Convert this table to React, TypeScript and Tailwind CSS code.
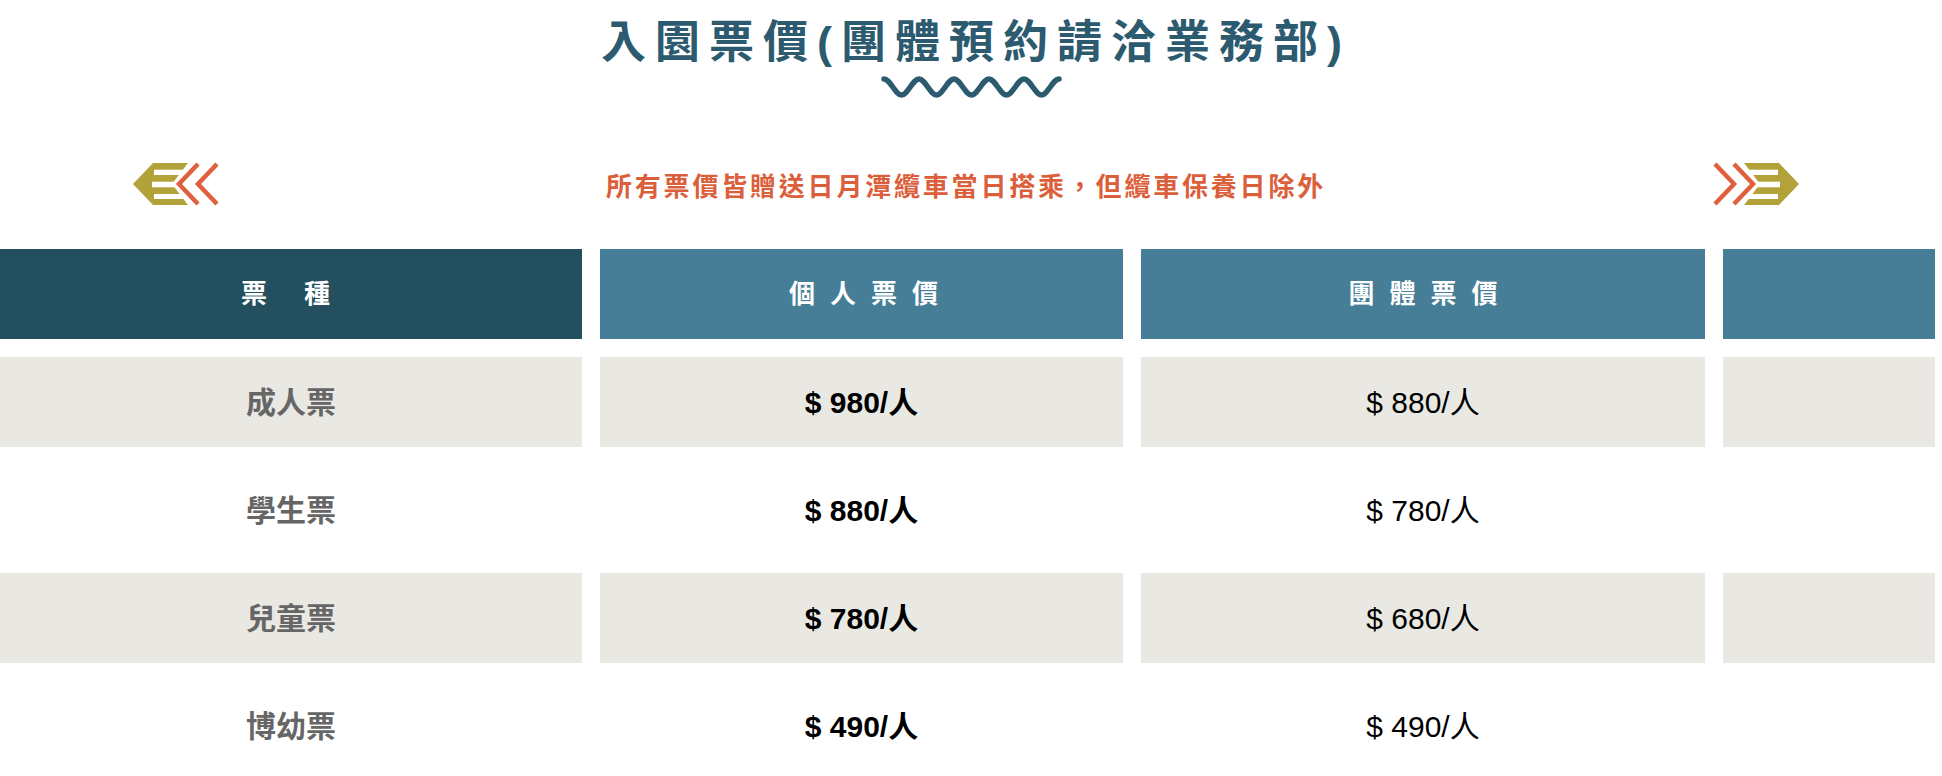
import React from "react";

// ── 票價資料 ────────────────────────────────────────────────────────────
const rows = [
  { name: "成人票", single: "$ 980/人", group: "$ 880/人" },
  { name: "學生票", single: "$ 880/人", group: "$ 780/人" },
  { name: "兒童票", single: "$ 780/人", group: "$ 680/人" },
  { name: "博幼票", single: "$ 490/人", group: "$ 490/人" },
];

const cjk = { fontFamily: '"Liberation Sans", "Noto Sans CJK TC", sans-serif' };

// ── 波浪線 ───────────────────────────────────────────────────────────────
function Wave() {
  let d = "M3 4";
  for (let i = 0; i < 5; i++) {
    const x = 3 + i * 35;
    d += ` C${x + 6} 4 ${x + 11.5} 20 ${x + 17.5} 20 C${x + 23.5} 20 ${x + 29} 4 ${x + 35} 4`;
  }
  return (
    <svg width="181" height="24" viewBox="0 0 181 24" className="block mx-auto">
      <path d={d} fill="none" stroke="#2c5a6f" strokeWidth="5.5" strokeLinecap="round" />
    </svg>
  );
}

// ── 箭頭裝飾 ─────────────────────────────────────────────────────────────
function Arrow({ flip = false }: { flip?: boolean }) {
  return (
    <svg
      width="88"
      height="46"
      viewBox="0 0 88 46"
      className={flip ? "block -scale-x-100" : "block"}
    >
      <polygon points="1,23 21,2 56,2 40,23 56,44 21,44" fill="#b3a23a" />
      <rect x="22" y="8.7" width="40" height="5.3" fill="#fff" />
      <rect x="20" y="20.7" width="40" height="5.6" fill="#fff" />
      <rect x="22" y="33" width="40" height="5" fill="#fff" />
      <polyline points="66,3 47,23 66,43" fill="none" stroke="#e0603e" strokeWidth="4.5" />
      <polyline points="85,3 66,23 85,43" fill="none" stroke="#e0603e" strokeWidth="4.5" />
    </svg>
  );
}

const headCls =
  "h-[90px] flex items-center justify-center text-white text-[26px] font-bold tracking-[15px]";

export default function App() {
  return (
    <div className="w-[1942px] h-[776px] bg-white overflow-hidden" style={cjk}>
      {/* 標題 */}
      <div className="pt-[17px] pl-[10px] text-center">
        <h1 className="text-[45px] leading-[52px] font-bold tracking-[9px] text-[#2c5a6f]">
          入園票價(團體預約請洽業務部)
        </h1>
      </div>
      <div className="mt-[6px]">
        <Wave />
      </div>

      {/* 說明 */}
      <div className="mt-[62px] h-[46px] flex items-center justify-between pl-[132px] pr-[142px]">
        <Arrow />
        <p className="pt-[6px] text-[26px] font-bold tracking-[2.8px] text-[#dc5f3c]">
          所有票價皆贈送日月潭纜車當日搭乘，但纜車保養日除外
        </p>
        <Arrow flip />
      </div>

      {/* 票價表 */}
      <div className="mt-[42px] grid grid-cols-[582px_523px_564px_212px] gap-[18px]">
        <div className={`${headCls} bg-[#244f5e] pl-[4px]`}>票 種</div>
        <div className={`${headCls} bg-[#467e97] pl-[19px]`}>個人票價</div>
        <div className={`${headCls} bg-[#467e97] pl-[15px]`}>團體票價</div>
        <div className="h-[90px] bg-[#467e97]" />

        {rows.map((r, i) => {
          const bg = i % 2 === 0 ? "bg-[#e9e8e3]" : "bg-white";
          return (
            <React.Fragment key={r.name}>
              <div className={`h-[90px] flex items-center justify-center ${bg} text-[30px] font-bold text-[#666666]`}>
                {r.name}
              </div>
              <div className={`h-[90px] flex items-center justify-center ${bg} text-[30px] font-bold text-black`}>
                {r.single}
              </div>
              <div className={`h-[90px] flex items-center justify-center ${bg} text-[30px] text-black`}>
                {r.group}
              </div>
              <div className={`h-[90px] ${bg}`} />
            </React.Fragment>
          );
        })}
      </div>
    </div>
  );
}
